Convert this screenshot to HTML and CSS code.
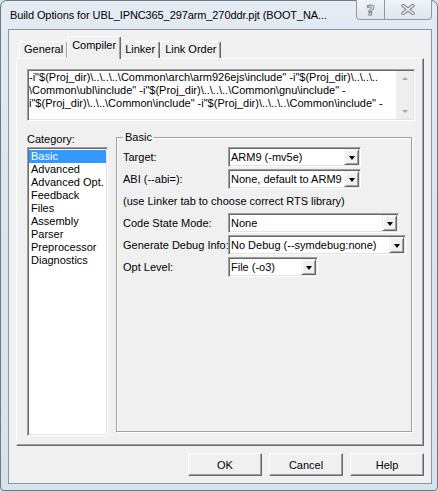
FILE: index.html
```html
<!DOCTYPE html>
<html>
<head>
<meta charset="utf-8">
<link rel="stylesheet" href="styles.css">
</head>
<body>
<div class="window">
  <div class="titlebar">
    <span class="title">Build Options for UBL_IPNC365_297arm_270ddr.pjt (BOOT_NA...</span>
    <div class="caption-btns">
      <span class="cbtn help"><span class="qmark">?</span></span>
      <span class="cbtn close">
        <svg width="14" height="11" viewBox="0 0 14 11"><path d="M2 1.5 L12 9.5 M12 1.5 L2 9.5" stroke="#7d8794" stroke-width="3.6" stroke-linecap="round" fill="none"/><path d="M2 1.5 L12 9.5 M12 1.5 L2 9.5" stroke="#f6f8fa" stroke-width="1.6" stroke-linecap="round" fill="none"/></svg>
      </span>
    </div>
  </div>
  <div class="client">
    <div class="tabs">
      <div class="tab">General</div>
      <div class="tab active">Compiler</div>
      <div class="tab">Linker</div>
      <div class="tab">Link Order</div>
    </div>
    <div class="panel">
      <div class="cmdline">
        <div class="cmdtext">-i"$(Proj_dir)\..\..\..\Common\arch\arm926ejs\include" -i"$(Proj_dir)\..\..\..
\Common\ubl\include" -i"$(Proj_dir)\..\..\..\Common\gnu\include" -
i"$(Proj_dir)\..\..\Common\include" -i"$(Proj_dir)\..\..\..\Common\include" -</div>
        <div class="vscroll">
          <span class="sarrow up"></span>
          <span class="sarrow down"></span>
        </div>
      </div>
      <div class="lower">
        <div class="catcol">
          <div class="catlabel">Category:</div>
          <ul class="catlist">
            <li class="selected">Basic</li>
            <li>Advanced</li>
            <li>Advanced Opt.</li>
            <li>Feedback</li>
            <li>Files</li>
            <li>Assembly</li>
            <li>Parser</li>
            <li>Preprocessor</li>
            <li>Diagnostics</li>
          </ul>
        </div>
        <div class="group">
          <span class="legend">Basic</span>
          <div class="row">
            <span class="lbl">Target:</span>
            <div class="combo w-target"><span class="val">ARM9 (-mv5e)</span><span class="arrow"></span></div>
          </div>
          <div class="row">
            <span class="lbl">ABI (--abi=):</span>
            <div class="combo w-target"><span class="val">None, default to ARM9</span><span class="arrow"></span></div>
          </div>
          <div class="row">
            <span class="note">(use Linker tab to choose correct RTS library)</span>
          </div>
          <div class="row">
            <span class="lbl">Code State Mode:</span>
            <div class="combo w-code"><span class="val">None</span><span class="arrow"></span></div>
          </div>
          <div class="row">
            <span class="lbl">Generate Debug Info:</span>
            <div class="combo w-debug"><span class="val">No Debug (--symdebug:none)</span><span class="arrow"></span></div>
          </div>
          <div class="row">
            <span class="lbl">Opt Level:</span>
            <div class="combo w-opt"><span class="val">File (-o3)</span><span class="arrow"></span></div>
          </div>
        </div>
      </div>
    </div>
    <div class="buttons">
      <button class="btn">OK</button>
      <button class="btn">Cancel</button>
      <button class="btn">Help</button>
    </div>
  </div>
</div>
</body>
</html>
```
FILE: styles.css
```css
* { box-sizing: border-box; }
html, body { margin: 0; padding: 0; }
body {
  width: 438px;
  height: 491px;
  overflow: hidden;
  background: #c9e6ef;
  font-family: "Liberation Sans", Arial, sans-serif;
  font-size: 11px;
  color: #000;
}
.window {
  width: 438px;
  height: 491px;
  background: linear-gradient(180deg, #e4ebf2 0%, #dce5ee 40%, #d6e3ed 100%);
  border: 1px solid #6e7986;
  border-radius: 7px 7px 4px 4px;
  display: flex;
  flex-direction: column;
  padding: 0 5px 6px 7px;
}
.titlebar {
  height: 28px;
  display: flex;
  justify-content: space-between;
  align-items: flex-start;
}
.title {
  font-family: "Liberation Sans", Arial, sans-serif;
  font-size: 11px;
  letter-spacing: -0.1px;
  line-height: 28px;
  padding-left: 2px;
  color: #000;
  white-space: nowrap;
  overflow: hidden;
}
.caption-btns {
  display: flex;
  flex: none;
  margin-top: -1px;
  height: 20px;
}
.cbtn {
  height: 20px;
  display: flex;
  align-items: center;
  justify-content: center;
  border: 1px solid #8e9aa7;
  border-top: none;
  background: linear-gradient(180deg, #f1f4f8 0%, #e6ecf2 50%, #dde5ee 100%);
}
.cbtn.help { width: 28px; border-radius: 0 0 0 4px; border-right: none; }
.cbtn.close { width: 48px; border-radius: 0 0 4px 0; }
.qmark {
  font-family: "DejaVu Sans", sans-serif;
  font-size: 14px;
  font-weight: bold;
  color: #f6f8fa;
  -webkit-text-stroke: 1px #7d8794;
  line-height: 14px;
}
.client {
  flex: 1;
  background: #f0f0f0;
  border: 1px solid #8a96a3;
  padding: 6px 7px 0 7px;
  display: flex;
  flex-direction: column;
}
.tabs {
  display: flex;
  align-items: flex-end;
  height: 22px;
  padding-left: 3px;
  position: relative;
  z-index: 1;
}
.tab {
  height: 17px;
  line-height: 15px;
  padding: 0 4px;
  border: 1px solid;
  border-color: #fff #696969 transparent #fff;
  border-bottom: none;
  border-radius: 2px 2px 0 0;
  background: #f0f0f0;
  box-shadow: inset -1px 0 0 #a0a0a0;
  white-space: nowrap;
}
.tab.active {
  position: relative;
  height: 23px;
  margin-bottom: -1px;
  margin-left: -1px;
  margin-right: -1px;
  padding: 0 4px;
  line-height: 17px;
}
.panel {
  height: 388px;
  border: 1px solid;
  border-color: #fff #696969 #696969 #fff;
  box-shadow: inset -1px -1px 0 #a0a0a0;
  padding: 10px 8px 0 10px;
}
.cmdline {
  height: 52px;
  display: flex;
  background: #fff;
  border: 1px solid;
  border-color: #a0a0a0 #fff #fff #a0a0a0;
  box-shadow: inset 1px 1px 0 #696969, inset -1px -1px 0 #e3e3e3;
  padding: 1px;
}
.cmdtext {
  flex: 1;
  white-space: pre;
  line-height: 13px;
  padding-left: 0;
  overflow: hidden;
}
.vscroll {
  width: 17px;
  background: #eeeeee;
  display: flex;
  flex-direction: column;
  justify-content: space-between;
  align-items: center;
  padding: 6px 0 6px;
}
.sarrow {
  width: 0;
  height: 0;
  border-left: 3px solid transparent;
  border-right: 3px solid transparent;
}
.sarrow.up { border-bottom: 3px solid #a8a8a8; }
.sarrow.down { border-top: 3px solid #a8a8a8; }
.lower {
  display: flex;
  margin-top: 12px;
}
.catcol {
  width: 81px;
  margin-right: 8px;
}
.catlabel {
  line-height: 13px;
  margin-bottom: 1px;
}
.catlist {
  list-style: none;
  margin: 0;
  height: 289px;
  background: #fff;
  border: 1px solid;
  border-color: #a0a0a0 #fff #fff #a0a0a0;
  box-shadow: inset 1px 1px 0 #696969, inset -1px -1px 0 #e3e3e3;
  padding: 2px 1px 1px 1px;
}
.catlist li {
  height: 13px;
  line-height: 13px;
  padding-left: 2px;
  white-space: nowrap;
}
.catlist li.selected {
  background: #3399ff;
  color: #fff;
}
.group {
  position: relative;
  width: 296px;
  height: 295px;
  margin-top: 4px;
  border: 1px solid #a0a0a0;
  box-shadow: inset 1px 1px 0 #fff, 1px 1px 0 #fff;
  padding: 9px 0 0 6px;
}
.legend {
  position: absolute;
  top: -7px;
  left: 6px;
  padding: 0 2px;
  line-height: 13px;
  background: #f0f0f0;
}
.row {
  display: flex;
  align-items: center;
  height: 20px;
  margin-bottom: 2px;
}
.lbl {
  width: 105px;
  white-space: nowrap;
}
.note { white-space: nowrap; }
.combo {
  display: flex;
  height: 20px;
  background: #fff;
  border: 1px solid;
  border-color: #a0a0a0 #fff #fff #a0a0a0;
  box-shadow: inset 1px 1px 0 #696969, inset -1px -1px 0 #e3e3e3;
  padding: 1px;
}
.w-target { width: 133px; }
.w-code { width: 171px; }
.w-debug { width: 178px; }
.w-opt { width: 90px; }
.val {
  flex: 1;
  padding-left: 1px;
  line-height: 16px;
  white-space: nowrap;
  overflow: hidden;
}
.arrow {
  width: 15px;
  height: 16px;
  flex: none;
  background: #f0f0f0;
  border: 1px solid;
  border-color: #f0f0f0 #696969 #696969 #f0f0f0;
  box-shadow: inset 1px 1px 0 #fff, inset -1px -1px 0 #a0a0a0;
  display: flex;
  align-items: center;
  justify-content: center;
}
.arrow::after {
  content: "";
  width: 0;
  height: 0;
  border-left: 3.5px solid transparent;
  border-right: 3.5px solid transparent;
  border-top: 4px solid #000;
  margin-top: 1px;
}
.buttons {
  display: flex;
  justify-content: flex-end;
  gap: 7px;
  margin-top: 7px;
}
.btn {
  width: 74px;
  height: 23px;
  font-family: "Liberation Sans", Arial, sans-serif;
  font-size: 11px;
  color: #000;
  background: #f0f0f0;
  border: 1px solid;
  border-color: #fff #696969 #696969 #fff;
  box-shadow: inset -1px -1px 0 #a0a0a0;
  padding: 0;
  margin: 0;
}
```
